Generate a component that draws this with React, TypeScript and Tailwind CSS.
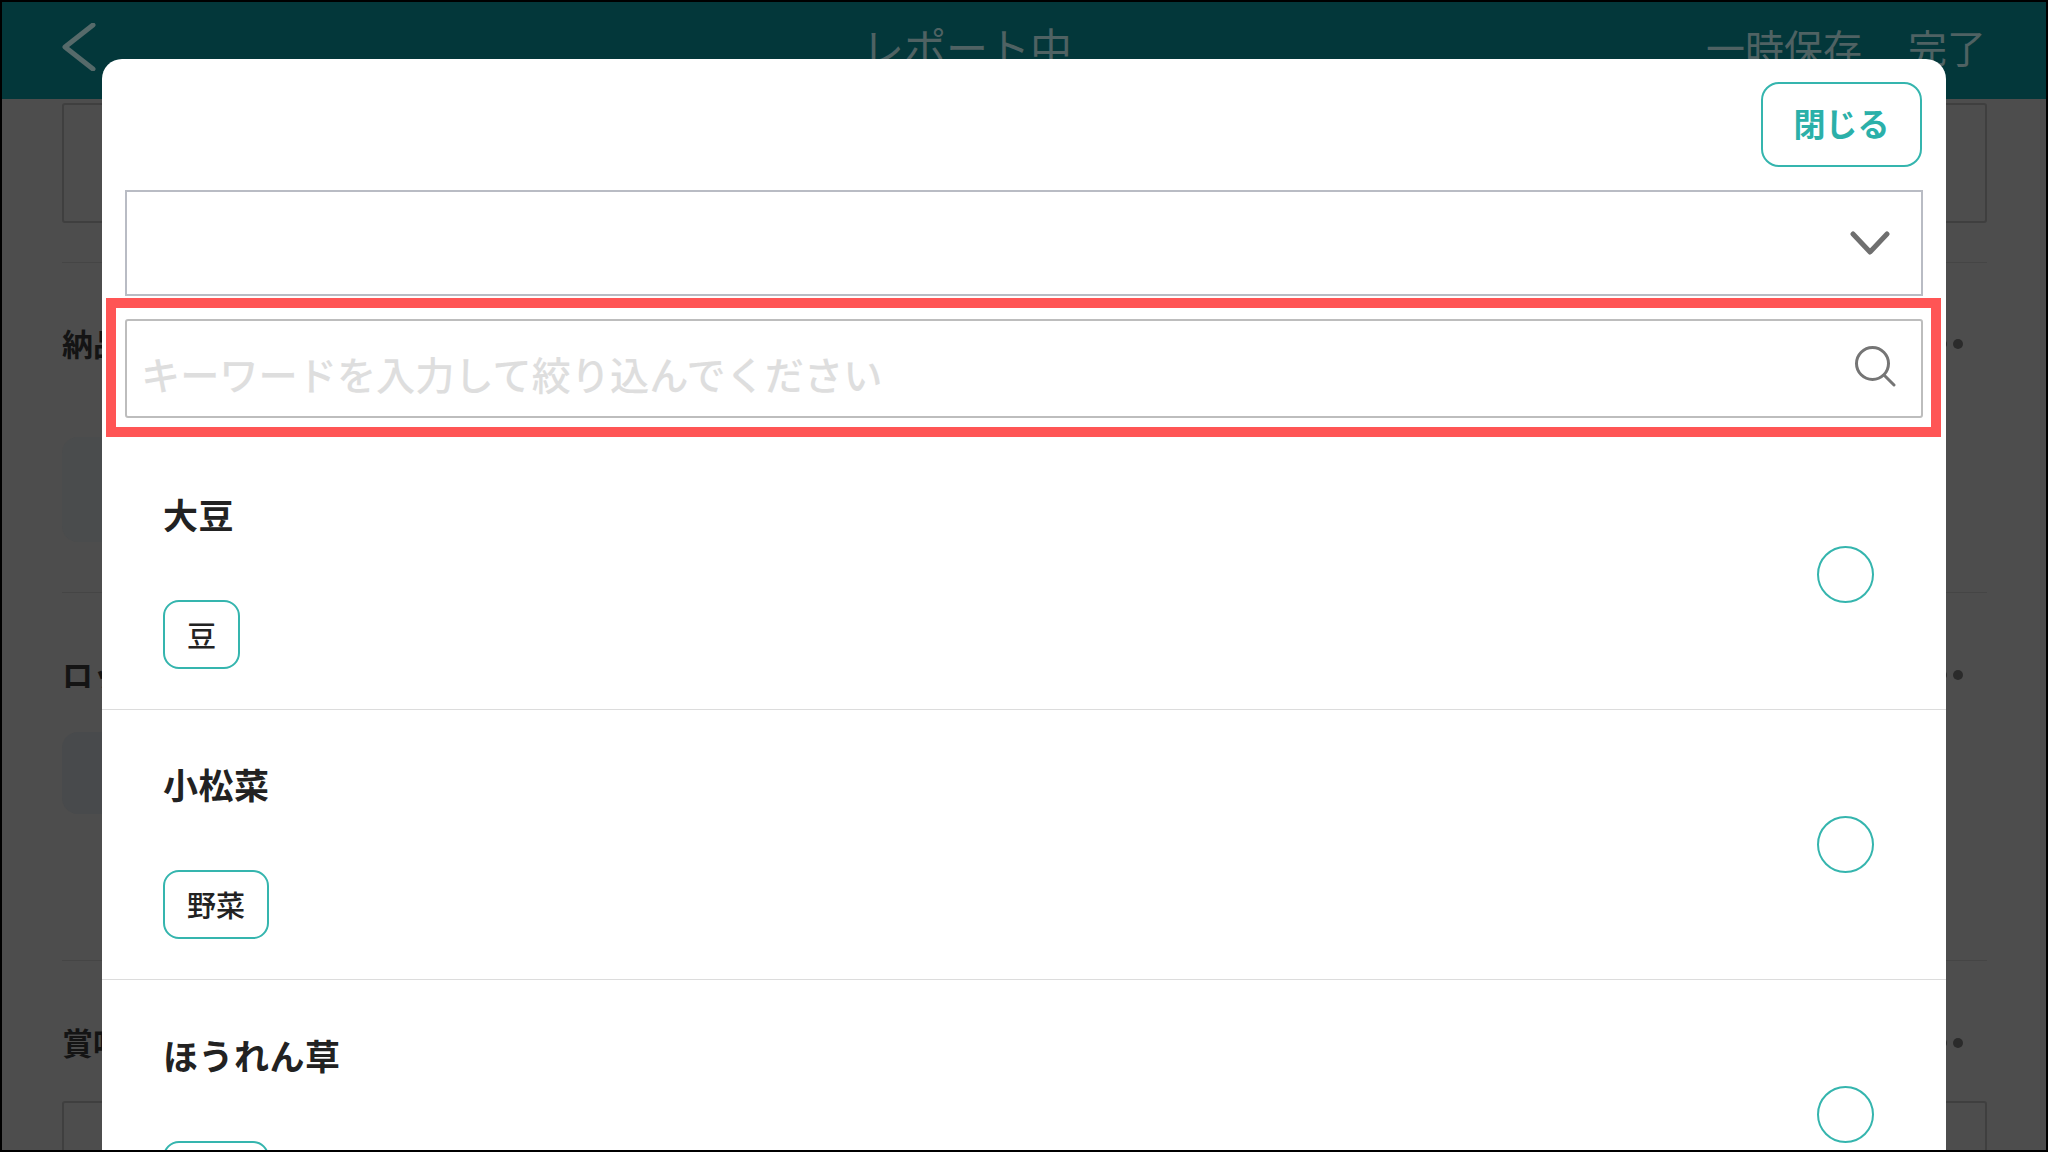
const jp = "font-['Noto_Sans_CJK_JP','Noto_Sans',sans-serif]";

const items = [
  { name: "大豆", tag: "豆" },
  { name: "小松菜", tag: "野菜" },
  { name: "ほうれん草", tag: "野菜" },
];

function Dots() {
  return (
    <div className="flex gap-[6px] mt-[2px]">
      <span className="w-[10px] h-[10px] rounded-full bg-[#2b2b2b]" />
      <span className="w-[10px] h-[10px] rounded-full bg-[#2b2b2b]" />
      <span className="w-[10px] h-[10px] rounded-full bg-[#2b2b2b]" />
    </div>
  );
}

function LabelRow({ label, className }: { label: string; className: string }) {
  return (
    <div className={`flex items-center justify-between pr-[24px] h-[34px] ${className}`}>
      <span className="text-[31px] leading-[34px] font-bold text-[#141414]">{label}</span>
      <Dots />
    </div>
  );
}

function Background() {
  return (
    <div className="h-full bg-[#4d4d4d]">
      <header className="h-[97px] bg-[#03373a] flex items-start text-[#4f6263] text-[39px] leading-[46px] pl-[60px] pr-[60px] pt-[21px]">
        <svg width="34" height="48" viewBox="0 0 34 48" fill="none" stroke="#566a6a" strokeWidth="5" strokeLinecap="round" strokeLinejoin="round">
          <path d="M31 2 3 24l28 22" />
        </svg>
        <span className="ml-[766px] text-[42px]">レポート中</span>
        <div className="ml-auto flex gap-[46px]">
          <span>一時保存</span>
          <span>完了</span>
        </div>
      </header>
      <div className="pl-[60px] pr-[59px] pt-[4px]">
        <div className="h-[120px] border-2 border-[#3f3f3f] rounded-[3px]" />
        <div className="mt-[39px] border-t border-[#454545]" />
        <LabelRow label="納品日" className="mt-[63px]" />
        <div className="mt-[77px] h-[105px] w-[300px] rounded-[16px] bg-[#4a4c4d]" />
        <div className="mt-[50px] border-t border-[#454545]" />
        <LabelRow label="ロット番号" className="mt-[64px]" />
        <div className="mt-[41px] h-[82px] w-[300px] rounded-[16px] bg-[#484a4c]" />
        <div className="mt-[146px] border-t border-[#454545]" />
        <LabelRow label="賞味期限" className="mt-[64px]" />
        <div className="mt-[42px] h-[120px] border-2 border-[#3f3f3f] rounded-[3px] pl-[34px] pt-[28px] text-[31px] font-bold text-[#141414]">
          日付
        </div>
      </div>
    </div>
  );
}

function Row({ name, tag, last }: { name: string; tag: string; last: boolean }) {
  return (
    <div className={`h-[270px] shrink-0 flex items-center justify-between pt-[14px] pl-[61px] pr-[72px] ${last ? "" : "border-b border-[#dcdcdc]"}`}>
      <div>
        <div className="text-[35px] leading-[40px] font-bold text-[#222222] tracking-[0.5px]">{name}</div>
        <div className="mt-[66px] inline-flex h-[69px] items-center px-[22px] border-2 border-[#35b5ae] rounded-[16px] text-[29px] font-medium text-[#222222]">
          {tag}
        </div>
      </div>
      <div className="w-[57px] h-[57px] rounded-full border-2 border-[#35b5ae] -mt-[15px]" />
    </div>
  );
}

function Modal() {
  return (
    <div className="absolute left-[100px] top-[57px] w-[1844px] h-[1400px] bg-white rounded-t-[20px] flex flex-col">
      <div className="flex justify-end pt-[23px] pr-[24px]">
        <button className="w-[161px] h-[85px] pb-[6px] border-2 border-[#35b5ae] rounded-[18px] text-[32px] font-bold text-[#2bb0a9]">
          閉じる
        </button>
      </div>
      <div className="mx-[23px] mt-[23px] h-[106px] border-2 border-[#b9bcc4] flex items-center justify-end pr-[31px]">
        <svg width="40" height="24" viewBox="0 0 40 24" fill="none" stroke="#6f6f6f" strokeWidth="5" strokeLinecap="round" strokeLinejoin="round">
          <path d="M3 3l17 18L37 3" />
        </svg>
      </div>
      <div className="mx-[23px] mt-[23px] h-[99px] border-2 border-[#bdbdbd] rounded-[3px] flex items-center justify-between pl-[14px] pr-[25px]">
        <span className="text-[39.2px] leading-[46px] text-[#dedede] font-medium mt-[9px]">キーワードを入力して絞り込んでください</span>
        <svg width="42" height="42" viewBox="0 0 42 42" fill="none" stroke="#757575" strokeWidth="3" strokeLinecap="round" className="-mt-[6px]">
          <circle cx="18.5" cy="18.5" r="16" />
          <path d="M30 30l10 10" />
        </svg>
      </div>
      <div className="mt-[22px] flex flex-col">
        {items.map((item, i) => (
          <Row key={item.name} name={item.name} tag={item.tag} last={i === items.length - 1} />
        ))}
      </div>
    </div>
  );
}

export default function App() {
  return (
    <div className={`relative w-[2048px] h-[1152px] overflow-hidden border-2 border-black ${jp}`}>
      <Background />
      <Modal />
      {/* red annotation round the search field */}
      <div className="absolute left-[104px] top-[296px] w-[1835px] h-[139px] border-[10px] border-[#ff5555]" />
    </div>
  );
}
